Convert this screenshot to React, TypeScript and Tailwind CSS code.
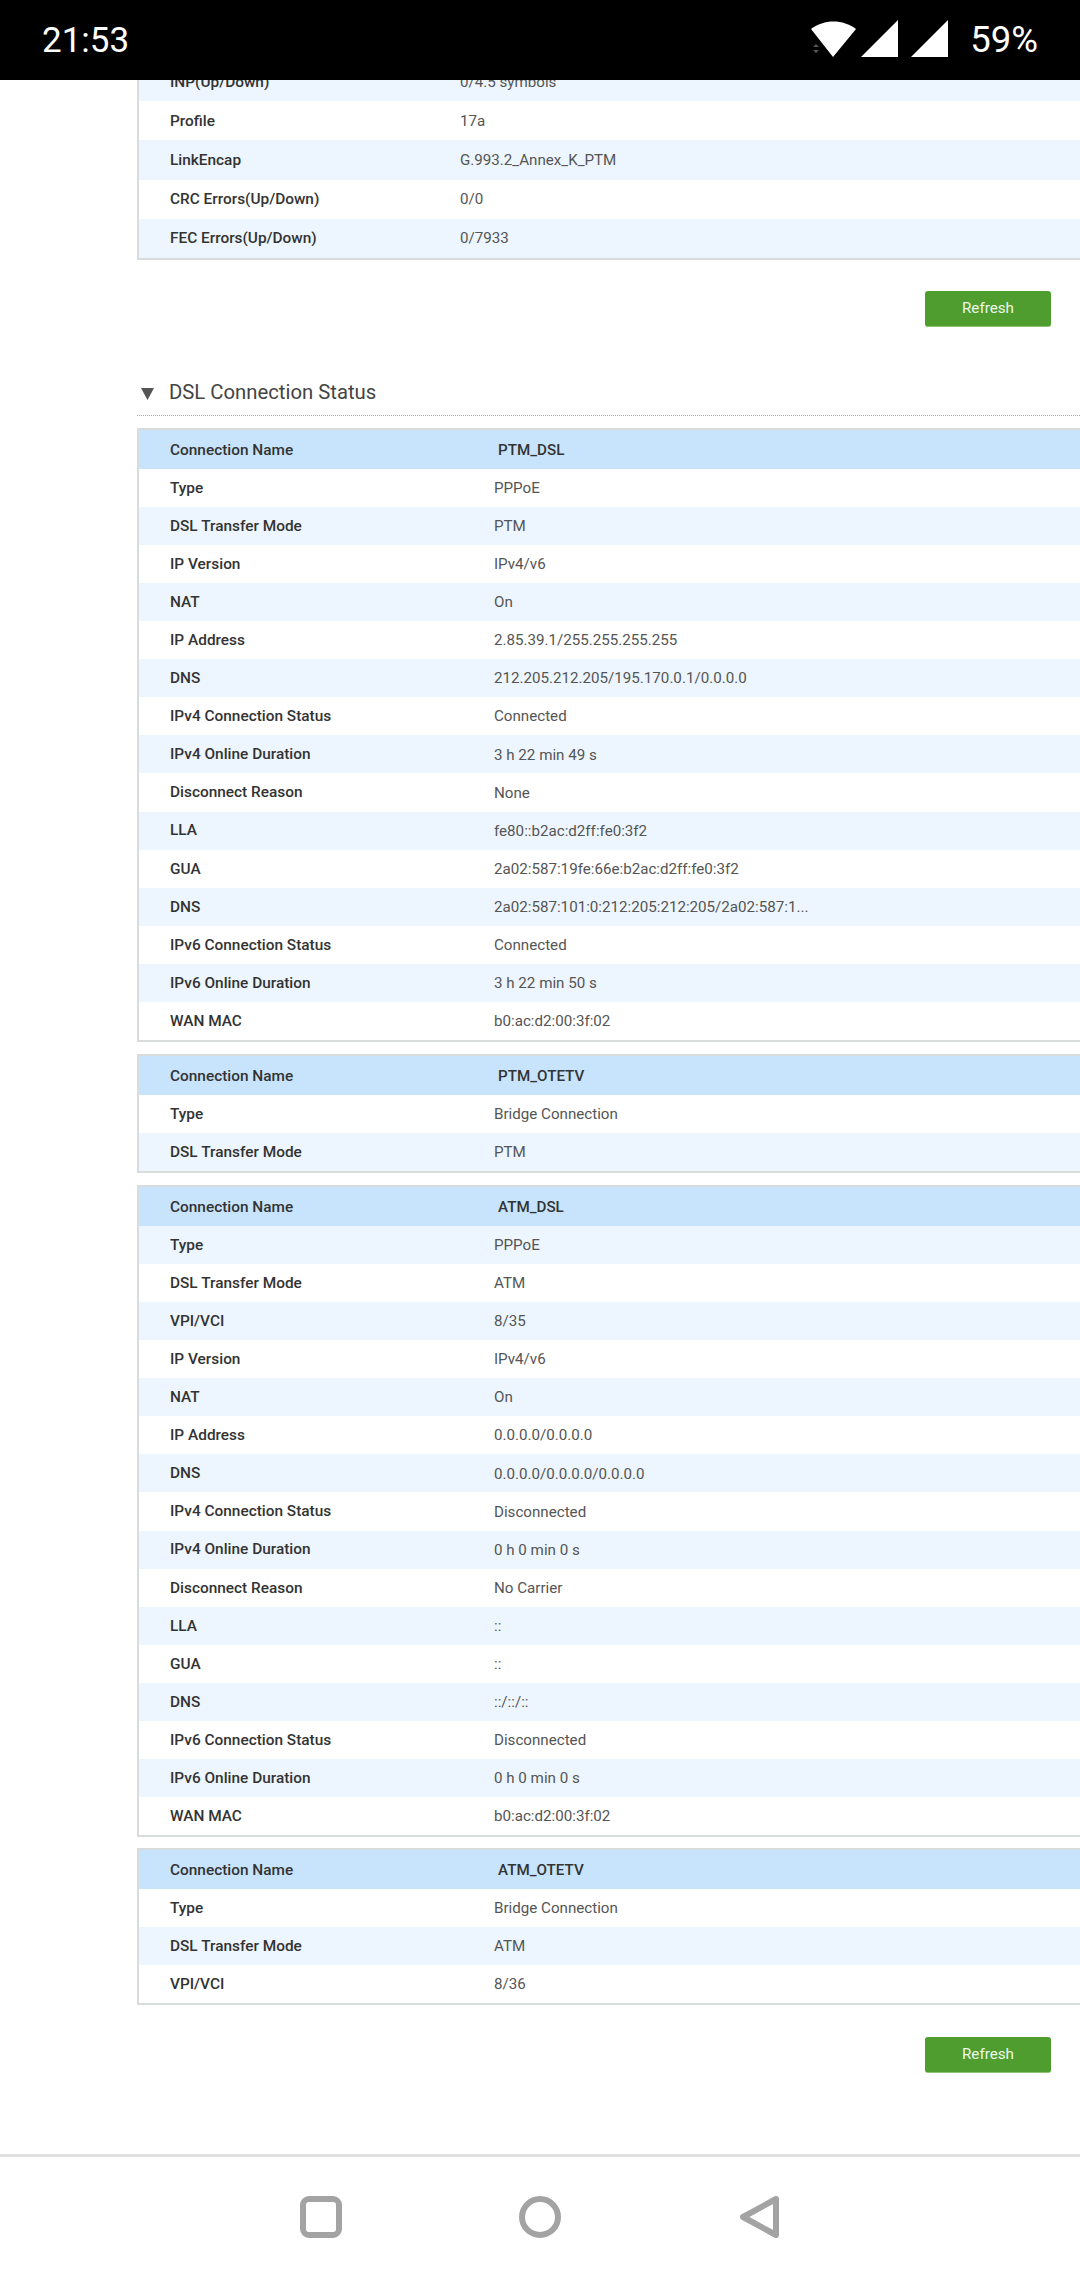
import React from "react";

type Row = [string, string];

const Field = ({ label, value, tint, header, h = "h-[38.07px]", valueX = "w-[324px]" }: { label: string; value: string; tint?: boolean; header?: boolean; h?: string; valueX?: string }) => (
  <div className={`flex items-center ${h} pl-[31px] ${header ? "pt-[2px] bg-[#c7e4fc]" : tint ? "pt-[1px] bg-[#edf6fe]" : "pt-[1px] bg-white"}`}>
    <div className={`${valueX} shrink-0 text-[15.4px] font-medium text-[#333333]`}>{label}</div>
    <div className={header ? "ml-[4px] text-[15.2px] font-medium text-[#333333]" : "text-[15.15px] text-[#555555]"}>{value}</div>
  </div>
);

const ConnTable = ({ name, rows, startTint = false }: { name: string; rows: Row[]; startTint?: boolean }) => (
  <div className="border-l-2 border-t-2 border-b-2 border-[#d9dcdc]">
    <Field label="Connection Name" value={name} header h="h-[39px]" />
    {rows.map(([l, v], i) => (
      <Field key={i} label={l} value={v} tint={(i % 2 === 1) !== startTint} />
    ))}
  </div>
);

const RefreshBtn = () => (
  <div className="flex justify-end pr-[29px]">
    <div className="flex h-[36px] w-[126px] items-center justify-center rounded-[3px] border-b border-[#8cc474] bg-[#4e9d2e] text-[15.2px] text-[#eef8ea]">Refresh</div>
  </div>
);

const ptmDsl: Row[] = [
  ["Type", "PPPoE"],
  ["DSL Transfer Mode", "PTM"],
  ["IP Version", "IPv4/v6"],
  ["NAT", "On"],
  ["IP Address", "2.85.39.1/255.255.255.255"],
  ["DNS", "212.205.212.205/195.170.0.1/0.0.0.0"],
  ["IPv4 Connection Status", "Connected"],
  ["IPv4 Online Duration", "3 h 22 min 49 s"],
  ["Disconnect Reason", "None"],
  ["LLA", "fe80::b2ac:d2ff:fe0:3f2"],
  ["GUA", "2a02:587:19fe:66e:b2ac:d2ff:fe0:3f2"],
  ["DNS", "2a02:587:101:0:212:205:212:205/2a02:587:1..."],
  ["IPv6 Connection Status", "Connected"],
  ["IPv6 Online Duration", "3 h 22 min 50 s"],
  ["WAN MAC", "b0:ac:d2:00:3f:02"],
];

const atmDsl: Row[] = [
  ["Type", "PPPoE"],
  ["DSL Transfer Mode", "ATM"],
  ["VPI/VCI", "8/35"],
  ["IP Version", "IPv4/v6"],
  ["NAT", "On"],
  ["IP Address", "0.0.0.0/0.0.0.0"],
  ["DNS", "0.0.0.0/0.0.0.0/0.0.0.0"],
  ["IPv4 Connection Status", "Disconnected"],
  ["IPv4 Online Duration", "0 h 0 min 0 s"],
  ["Disconnect Reason", "No Carrier"],
  ["LLA", "::"],
  ["GUA", "::"],
  ["DNS", "::/::/::"],
  ["IPv6 Connection Status", "Disconnected"],
  ["IPv6 Online Duration", "0 h 0 min 0 s"],
  ["WAN MAC", "b0:ac:d2:00:3f:02"],
];

export default function App() {
  return (
    <div className="flex h-[2280px] w-[1080px] flex-col overflow-hidden bg-white" style={{ fontFamily: "Roboto, sans-serif" }}>
      <header className="relative z-10 flex h-[80px] shrink-0 items-center justify-between bg-black pl-[42px] pr-[42px] text-white">
        <span className="text-[35px] font-normal leading-none">21:53</span>
        <div className="flex items-center">
          <svg width="138" height="40" viewBox="0 0 138 40" className="mr-[21px] mt-[-1px]" fill="#fff">
            <path d="M0 9 C13 -1 32 -1 45 9 L22 37 Z" />
            <path d="M2 27 L5 24 L8 27 Z M2 30 L8 30 L5 33 Z" fill="#555" />
            <path d="M50 37 L87 0 L87 37 Z" />
            <path d="M100 37 L137 0 L137 37 Z" />
          </svg>
          <span className="text-[36.5px] font-normal leading-none">59%</span>
        </div>
      </header>
      <main className="flex min-h-0 flex-1 flex-col">
        <div className="ml-[137px] -mt-[18px] border-l-2 border-b-2 border-[#d9dcdc]">
          {[
            ["INP(Up/Down)", "0/4.5 symbols", true],
            ["Profile", "17a", false],
            ["LinkEncap", "G.993.2_Annex_K_PTM", true],
            ["CRC Errors(Up/Down)", "0/0", false],
            ["FEC Errors(Up/Down)", "0/7933", true],
          ].map(([l, v, t], i) => (
            <Field key={i} label={l as string} value={v as string} tint={t as boolean} h="h-[39.2px]" valueX="w-[290px]" />
          ))}
        </div>
        <div className="mt-[31px]"><RefreshBtn /></div>
        <section className="ml-[137px] mt-[45px]">
          <div className="flex h-[44px] items-center border-b border-dotted border-[#a8a8a8] pb-[3px]">
            <svg width="13" height="12" viewBox="0 0 13 12" className="ml-[4px] mr-[15px] mt-[4px]" fill="#555"><path d="M0 0 H13 L6.5 12 Z" /></svg>
            <span className="text-[20.3px] font-normal text-[#444444]">DSL Connection Status</span>
          </div>
          <div className="mt-[12px] flex flex-col gap-[12px]">
            <ConnTable name="PTM_DSL" rows={ptmDsl} />
            <ConnTable name="PTM_OTETV" rows={[["Type", "Bridge Connection"], ["DSL Transfer Mode", "PTM"]]} />
            <ConnTable name="ATM_DSL" rows={atmDsl} startTint />
            <div className="-mt-[1px]">
              <ConnTable name="ATM_OTETV" rows={[["Type", "Bridge Connection"], ["DSL Transfer Mode", "ATM"], ["VPI/VCI", "8/36"]]} />
            </div>
          </div>
        </section>
        <div className="mt-[32px]"><RefreshBtn /></div>
      </main>
      <nav className="flex h-[126px] shrink-0 items-start justify-center gap-[177px] border-t-[3px] border-[#e0e0e0] bg-white pl-[2px] pt-[39px]">
        <svg width="42" height="42" viewBox="0 0 42 42" fill="none" stroke="#a3a3a3" strokeWidth="6"><rect x="3" y="3" width="36" height="36" rx="6" /></svg>
        <svg width="42" height="42" viewBox="0 0 42 42" fill="none" stroke="#a3a3a3" strokeWidth="6"><circle cx="21" cy="21" r="18" /></svg>
        <svg width="42" height="42" viewBox="0 0 42 42" className="ml-[2px]" fill="none" stroke="#a3a3a3" strokeWidth="6" strokeLinejoin="round"><path d="M36 3 L3 21 L36 39 Z" /></svg>
      </nav>
    </div>
  );
}
